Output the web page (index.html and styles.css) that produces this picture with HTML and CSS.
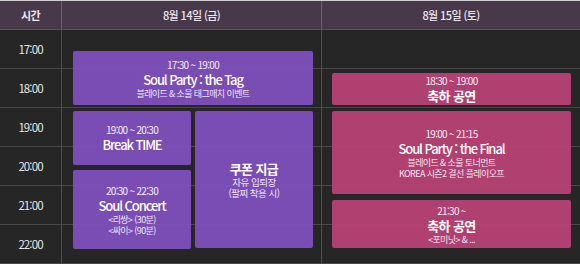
FILE: index.html
```html
<!DOCTYPE html>
<html lang="ko">
<head>
<meta charset="utf-8">
<link rel="stylesheet" href="styles.css">
</head>
<body>
<div class="sched">
  <div class="head">
    <div class="hc hc-time">시간</div>
    <div class="hc hc-day1">8월 14일 (금)</div>
    <div class="hc">8월 15일 (토)</div>
  </div>
  <div class="body">
    <div class="row r1"></div>
    <div class="row r2"></div>
    <div class="row r3"></div>
    <div class="row r4"></div>
    <div class="row r5"></div>
    <div class="row r6"></div>
    <div class="tm r1">17:00</div>
    <div class="tm r2">18:00</div>
    <div class="tm r3">19:00</div>
    <div class="tm r4">20:00</div>
    <div class="tm r5">21:00</div>
    <div class="tm r6">22:00</div>

    <div class="day day1">
      <div class="ev purple ev-tag">
        <div class="t">17:30 ~ 19:00</div>
        <div class="ttl">Soul Party : the Tag</div>
        <div class="sub">블레이드 &amp; 소울 태그매치 이벤트</div>
      </div>
      <div class="split">
        <div class="stack">
          <div class="ev purple ev-break">
            <div class="t">19:00 ~ 20:30</div>
            <div class="ttl">Break TIME</div>
          </div>
          <div class="ev purple ev-concert">
            <div class="t">20:30 ~ 22:30</div>
            <div class="ttl">Soul Concert</div>
            <div class="sub">&lt;리쌍&gt; (30분)</div>
            <div class="sub">&lt;싸이&gt; (90분)</div>
          </div>
        </div>
        <div class="ev purple ev-coupon">
          <div class="ttl ttl-ko">쿠폰 지급</div>
          <div class="sub sub-lg">자유 입퇴장</div>
          <div class="sub sub-lg">(팔찌 착용 시)</div>
        </div>
      </div>
    </div>

    <div class="day day2">
      <div class="ev pink ev-cele1">
        <div class="t">18:30 ~ 19:00</div>
        <div class="ttl ttl-ko">축하 공연</div>
      </div>
      <div class="ev pink ev-final">
        <div class="t">19:00 ~ 21:15</div>
        <div class="ttl">Soul Party : the Final</div>
        <div class="sub">블레이드 &amp; 소울 토너먼트</div>
        <div class="sub">KOREA 시즌2 결선 플레이오프</div>
      </div>
      <div class="ev pink ev-cele2">
        <div class="t">21:30 ~</div>
        <div class="ttl ttl-ko">축하 공연</div>
        <div class="sub">&lt;포미닛&gt; &amp; ...</div>
      </div>
    </div>
  </div>
</div>
</body>
</html>
```

FILE: styles.css
```css
* { box-sizing: border-box; margin: 0; padding: 0; }
html, body { background: #262626; }
body {
  font-family: "Noto Sans CJK KR", "Noto Sans", sans-serif;
  color: #fff;
  width: 580px;
  height: 264px;
  overflow: hidden;
}
.sched { width: 580px; }
.head {
  display: grid;
  grid-template-columns: 62px 260px 258px;
  height: 30px;
  background: #47394a;
  border-top: 1px solid #cfcfcf;
  border-bottom: 1px solid #5a5060;
}
.hc {
  display: flex;
  align-items: center;
  justify-content: center;
  font-size: 11px;
  font-weight: 500;
  letter-spacing: -0.6px;
  color: #ece6ee;
  padding-bottom: 1px;
}
.hc-time { font-weight: 700; }
.hc-time, .hc-day1 { border-right: 1px solid #6a5f6c; }

.body {
  display: grid;
  grid-template-columns: 62px 260px 258px;
  grid-template-rows: repeat(6, 39px);
}
.row {
  grid-column: 1 / -1;
  border-bottom: 1px solid #474747;
}
.r1 { grid-row: 1; }
.r2 { grid-row: 2; }
.r3 { grid-row: 3; }
.r4 { grid-row: 4; }
.r5 { grid-row: 5; }
.r6 { grid-row: 6; }
.tm {
  grid-column: 1;
  display: flex;
  align-items: center;
  justify-content: center;
  border-right: 1px solid #4d4d4d;
  border-bottom: 1px solid #474747;
  font-size: 11.5px;
  letter-spacing: -0.9px;
  color: #e6e6e6;
  padding-bottom: 1px;
}
.day { grid-row: 1 / -1; display: flex; flex-direction: column; }
.day1 {
  grid-column: 2;
  border-right: 1px solid #4d4d4d;
  padding: 21px 8px 0 11px;
  gap: 6px;
}
.day2 {
  grid-column: 3;
  padding: 43px 9px 0 10px;
  gap: 6px;
}
.split { display: flex; gap: 4px; }
.stack { display: flex; flex-direction: column; gap: 5px; width: 118px; }

.ev {
  display: flex;
  flex-direction: column;
  align-items: center;
  justify-content: center;
  border-radius: 2px;
  text-align: center;
}
.purple { background: rgba(129, 80, 192, 0.92); }
.pink { background: rgba(188, 66, 117, 0.92); }
.ev-tag { height: 54px; }
.ev-break { height: 54px; }
.ev-concert { height: 79px; }
.ev-coupon { width: 118px; height: 137px; }
.ev-cele1 { height: 32px; }
.ev-final { height: 83px; }
.ev-cele2 { height: 48px; }

.t {
  font-size: 10px;
  line-height: 13px;
  letter-spacing: -0.7px;
  color: #f3eef8;
}
.ttl {
  font-size: 13px;
  line-height: 17px;
  letter-spacing: -1.1px;
  font-weight: 500;
}
.ttl-ko { font-weight: 700; font-size: 13px; letter-spacing: -0.6px; }
.sub {
  font-size: 9px;
  line-height: 11px;
  letter-spacing: -0.6px;
  color: #efe6f5;
}
.sub-lg { font-size: 9.5px; letter-spacing: -0.5px; }
```
